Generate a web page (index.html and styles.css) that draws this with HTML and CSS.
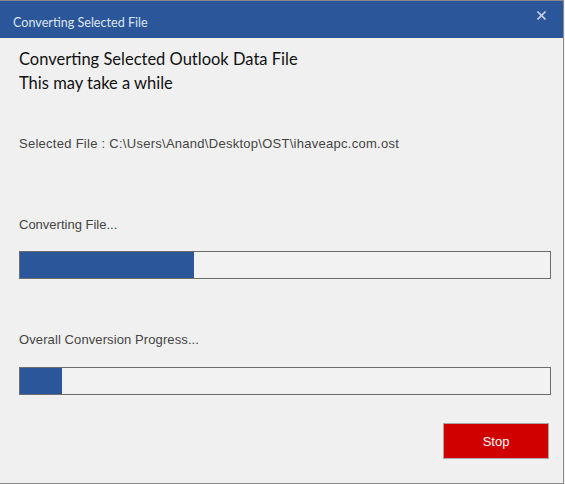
FILE: index.html
```html
<!DOCTYPE html>
<html>
<head>
<meta charset="utf-8">
<link rel="stylesheet" href="styles.css">
</head>
<body>
<div class="window">
  <div class="titlebar">
    <span class="title">Converting Selected File</span>
    <svg class="close" width="9" height="9" viewBox="0 0 9 9"><path d="M0.5 0.5L8.5 8.5M8.5 0.5L0.5 8.5" stroke="#c5cfdf" stroke-width="1.6" fill="none"/></svg>
  </div>
  <div class="content">
    <div class="heading">
      <div>Converting Selected Outlook Data File</div>
      <div>This may take a while</div>
    </div>
    <div class="label selected">Selected File : C:\Users\Anand\Desktop\OST\ihaveapc.com.ost</div>
    <div class="label converting">Converting File...</div>
    <div class="bar bar-file"><div class="fill" style="width:174px"></div></div>
    <div class="label overall">Overall Conversion Progress...</div>
    <div class="bar bar-overall"><div class="fill" style="width:42px"></div></div>
    <div class="actions"><button class="stop">Stop</button></div>
  </div>
</div>
</body>
</html>
```
FILE: styles.css
```css
html, body {
  margin: 0;
  padding: 0;
  background: #f0f0f0;
}
.window {
  box-sizing: border-box;
  width: 564px;
  height: 484px;
  background: #f0f0f0;
  border-top: 1px solid #8a8a8a;
  border-right: 1px solid #8a8a8a;
  border-bottom: 1px solid #8a8a8a;
}
.titlebar {
  height: 37px;
  background: #2b579a;
  display: flex;
  justify-content: space-between;
  align-items: flex-start;
}
.title {
  font-family: Lato, "Noto Sans", sans-serif;
  font-size: 12.6px;
  line-height: 18px;
  color: #dde4ef;
  padding-top: 13px;
  padding-left: 13px;
}
.close {
  margin-top: 10px;
  margin-right: 17px;
}
.content {
  padding: 0 12px 0 19px;
  display: flex;
  flex-direction: column;
}
.heading {
  margin-top: 8.5px;
  font-family: Lato, "Noto Sans", sans-serif;
  font-size: 16.5px;
  line-height: 24px;
  color: #111;
}
.label {
  font-family: "Liberation Sans", Arial, sans-serif;
  font-size: 13px;
  line-height: 16px;
  color: #444;
}
.selected { margin-top: 41px; letter-spacing: 0.27px; }
.converting { margin-top: 65px; }
.overall { margin-top: 52.5px; letter-spacing: 0.1px; }
.bar {
  box-sizing: border-box;
  width: 532px;
  height: 28px;
  border: 1px solid #6d6d6d;
  background: #f2f2f2;
}
.bar-file { margin-top: 18.5px; }
.bar-overall { margin-top: 19.5px; }
.fill {
  height: 100%;
  background: #2b579a;
}
.actions {
  width: 532px;
  display: flex;
  justify-content: flex-end;
  margin-top: 28px;
}
.stop {
  box-sizing: border-box;
  width: 106px;
  height: 36px;
  margin-right: 2px;
  background: #d10000;
  border: 1px solid #a8a8a8;
  color: #fff;
  font-family: "Liberation Sans", Arial, sans-serif;
  font-size: 13px;
  padding: 0;
}
```
